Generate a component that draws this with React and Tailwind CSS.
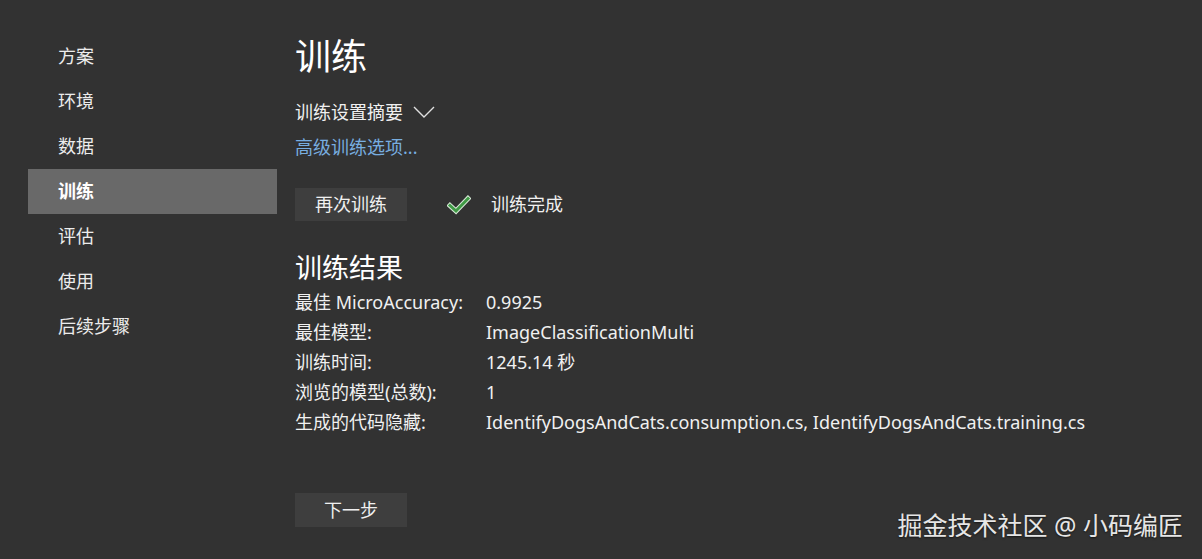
import React from 'react';

const font = { fontFamily: '"Noto Sans", "Noto Sans CJK SC", sans-serif' };

const navItems = ['方案', '环境', '数据', '训练', '评估', '使用', '后续步骤'];

const results = [
  ['最佳 MicroAccuracy:', '0.9925'],
  ['最佳模型:', 'ImageClassificationMulti'],
  ['训练时间:', '1245.14 秒'],
  ['浏览的模型(总数):', '1'],
  ['生成的代码隐藏:', 'IdentifyDogsAndCats.consumption.cs, IdentifyDogsAndCats.training.cs'],
];

const CheckIcon = () => (
  <svg width="24" height="20" viewBox="0 0 24 20">
    <path d="M3 10.5 L9 16 L21 3.5" fill="none" stroke="#d8ead8" strokeWidth="5" strokeLinecap="square" />
    <path d="M3 10.5 L9 16 L21 3.5" fill="none" stroke="#3f9a45" strokeWidth="3" strokeLinecap="square" />
  </svg>
);

export default function App() {
  return (
    <div className="w-[1202px] h-[559px] bg-[#323232] text-[#f0f0f0] flex relative overflow-hidden" style={font}>
      {/* Sidebar */}
      <aside className="pl-7 pt-[34px] w-[277px] shrink-0">
        <ul className="flex flex-col">
          {navItems.map((item) => (
            <li
              key={item}
              className={
                'h-[45px] flex items-center pl-[30px] text-[18px] ' +
                (item === '训练' ? 'bg-[#696969] font-bold text-white' : 'text-[#ececec]')
              }
            >
              {item}
            </li>
          ))}
        </ul>
      </aside>

      {/* Main */}
      <main className="pl-[18px] pt-[33px] flex-1">
        <h1 className="text-[36px] leading-[48px] text-white">训练</h1>
        <div className="mt-[18px] flex items-center gap-[10px] text-[18px] leading-[26px]">
          <span>训练设置摘要</span>
          <svg width="22" height="12" viewBox="0 0 22 12">
            <path d="M1 1 L11 11 L21 1" fill="none" stroke="#e0e0e0" strokeWidth="1.4" />
          </svg>
        </div>
        <div className="mt-[9px] text-[18px] leading-[26px] text-[#78aee0]">高级训练选项...</div>

        <div className="mt-[28px] flex items-center">
          <button className="w-[112px] h-[33px] bg-[#3e3e3e] text-[18px] text-[#f0f0f0]">再次训练</button>
          <div className="ml-[40px]"><CheckIcon /></div>
          <span className="ml-[20px] text-[18px]">训练完成</span>
        </div>

        <h2 className="mt-[29px] text-[27px] leading-[36px] text-white">训练结果</h2>
        <div className="mt-[1px] flex flex-col text-[18px]">
          {results.map(([k, v]) => (
            <div key={k} className="flex h-[30px] items-center">
              <span className="w-[191px] shrink-0">{k}</span>
              <span>{v}</span>
            </div>
          ))}
        </div>

        <button className="mt-[56px] w-[112px] h-[34px] bg-[#3e3e3e] text-[18px] text-[#f0f0f0]">下一步</button>
      </main>

      <div className="absolute right-[19px] bottom-[15px] text-[25px] text-[#e6e6e6] [text-shadow:0_1px_2px_rgba(0,0,0,0.6)]">
        掘金技术社区 @ 小码编匠
      </div>
    </div>
  );
}
